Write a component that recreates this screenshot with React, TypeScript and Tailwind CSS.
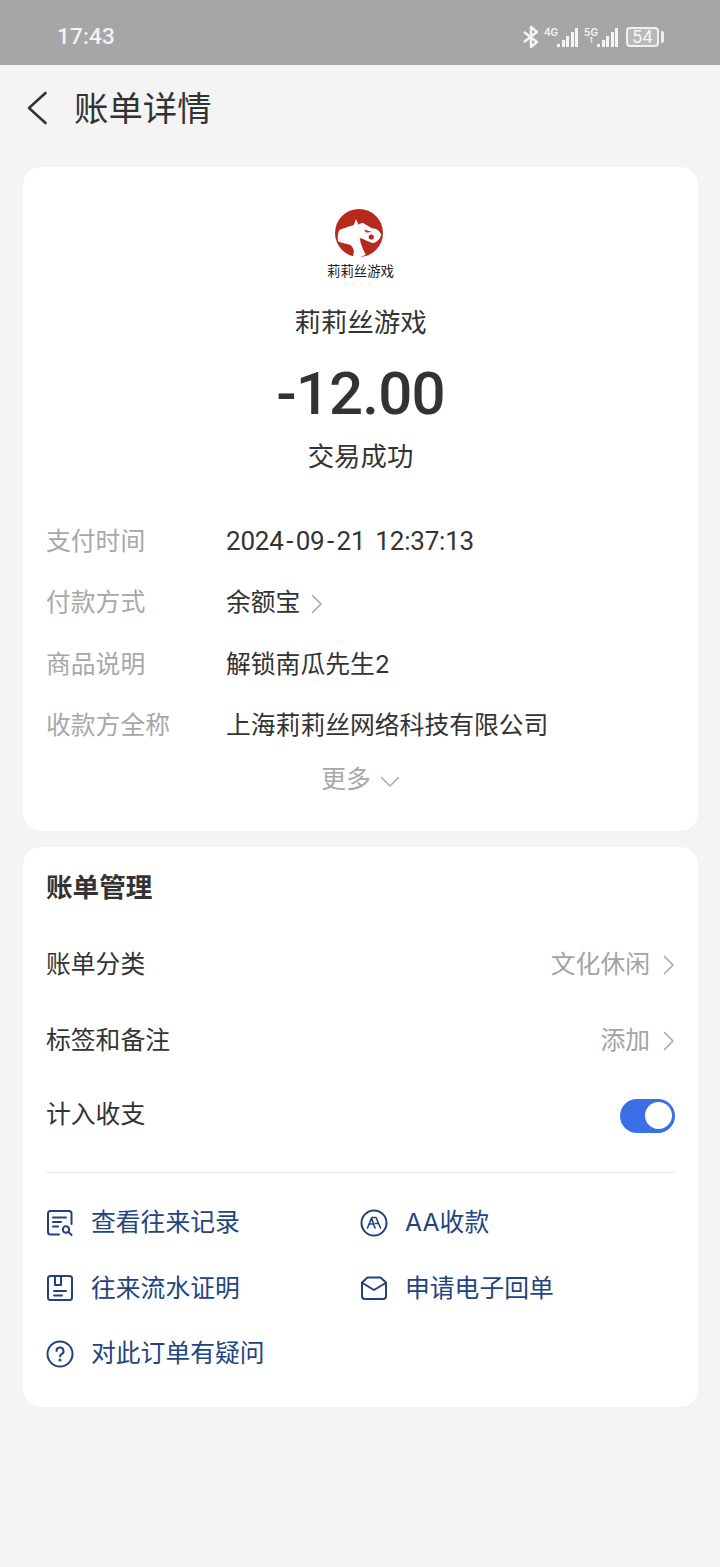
import React from "react";

const F = "font-['Inter','Noto_Sans_CJK_SC',sans-serif]";

function Chevron({ className = "" }: { className?: string }) {
  return (
    <svg width="12" height="20" viewBox="0 0 12 20" fill="none" className={className}>
      <path d="M1.5 1.5L10 10L1.5 18.5" stroke="#a9a9a9" strokeWidth="1.6" strokeLinecap="round" strokeLinejoin="round" />
    </svg>
  );
}

function InfoRow({ label, children }: { label: string; children: React.ReactNode }) {
  return (
    <div className="flex h-[61.3px] items-center">
      <div className="w-[180px] text-[24.8px] text-[#a8a8a8]">{label}</div>
      <div className="flex items-center text-[24.8px] text-[#333333]">{children}</div>
    </div>
  );
}

function ManageRow({ label, value }: { label: string; value: string }) {
  return (
    <div className="flex h-[76px] items-center justify-between">
      <span className="text-[24.8px] text-[#333333]">{label}</span>
      <span className="flex items-center gap-[13px] text-[24.8px] text-[#a3a3a3]">
        {value}
        <Chevron />
      </span>
    </div>
  );
}

const iconProps = { width: 28, height: 28, viewBox: "0 0 28 28", fill: "none", stroke: "#23417c", strokeWidth: 2, strokeLinecap: "round" as const, strokeLinejoin: "round" as const };

function LinkItem({ icon, text }: { icon: React.ReactNode; text: string }) {
  return (
    <div className="flex h-[65.5px] items-center gap-[17px]">
      {icon}
      <span className="text-[24.8px] text-[#23457f]">{text}</span>
    </div>
  );
}

function Signal({ label, sub }: { label: string; sub?: string }) {
  return (
    <div className="flex items-end">
      <div className="flex h-[20px] w-[12px] flex-col items-center text-[10px] font-semibold leading-[10px] text-[#f5f5f5]">
        <span>{label}</span>
        {sub ? <span className="text-[7px] leading-[8px]">{sub}</span> : null}
      </div>
      <div className="flex h-[19px] items-end gap-[1.5px]">
        <i className="block h-[3px] w-[3px] bg-[#f5f5f5]" />
        <i className="block h-[7px] w-[3px] bg-[#f5f5f5]" />
        <i className="block h-[11px] w-[3px] bg-[#f5f5f5]" />
        <i className="block h-[15px] w-[3px] bg-[#f5f5f5]" />
        <i className="block h-[19px] w-[3px] bg-[#f5f5f5]" />
      </div>
    </div>
  );
}

export default function App() {
  return (
    <div className={`flex h-[1567px] w-[720px] flex-col overflow-hidden bg-[#f4f4f4] ${F}`}>
      <div className="flex h-[65px] shrink-0 items-center justify-between bg-[#a6a6a6] pl-[57px] pr-[56px] pt-[9px]">
        <span className="font-['Roboto',sans-serif] text-[22.5px] font-medium tracking-[0.2px] text-[#f2f2f2]">17:43</span>
        <div className="flex items-center">
          <svg width="18" height="24" viewBox="0 0 18 24" fill="none" stroke="#f5f5f5" strokeWidth="2.4">
            <path d="M2 7L15 17L9 22V2L15 7L2 17" strokeLinejoin="round" />
          </svg>
          <div className="ml-[5px]"><Signal label="4G" /></div>
          <div className="ml-[7px]"><Signal label="5G" sub="1" /></div>
          <div className="ml-[8px] flex h-[20px] w-[33px] items-center justify-center rounded-[4px] border-2 border-[#f0f0f0] bg-[#b9b9b9] font-['Roboto',sans-serif] text-[18px] leading-none tracking-[0.5px] text-[#f5f5f5]">54</div>
          <div className="ml-[2px] h-[12px] w-[3px] rounded-r-[2px] bg-[#f0f0f0]" />
        </div>
      </div>

      <div className="flex h-[88px] shrink-0 items-center pl-[26px]">
        <svg width="22" height="34" viewBox="0 0 22 34" fill="none" className="mb-[2px]">
          <path d="M19.5 2L3 17L19.5 32" stroke="#333333" strokeWidth="2.6" strokeLinecap="round" strokeLinejoin="round" />
        </svg>
        <span className="ml-[26px] text-[34.4px] text-[#333333]">账单详情</span>
      </div>

      <div className="ml-[23px] mt-[14px] h-[664px] w-[675px] shrink-0 rounded-[18px] bg-white px-[23px]">
        <div className="flex flex-col items-center pt-[42px]">
          <svg width="50" height="50" viewBox="0 0 50 50" className="-ml-[3px]">
            <circle cx="25" cy="24" r="24" fill="#b8291d" />
            <path d="M4 25.7C4.5 23 5 21.5 5.7 20.7C9 19.5 13 18.5 15.7 17.3C17.5 16.8 19 16.5 19.7 15.7C21 14 21.5 12 21.7 10C23 12 24 14 24 15.7C26 14.5 27.5 14 29 14C32 15.5 35 17.5 37.3 19C40 19.5 42.5 20 44 21.3C45.5 22.5 46.5 24 47.3 25.7C46.5 28 45.5 30 44 31.3C42 33 40.5 34 39 34C37 34 35.5 33 34 32.3C32 31.5 30.5 30.5 29 30C28 29.5 27 29.2 25.7 29C26 31 26.5 33.5 27.3 35.7C28.5 39 30 42.5 31.7 45.7C29.5 47 27.5 47.7 25.7 48L19 48C19.5 45.5 20 43 19.7 41C19 38.5 17.5 36.5 15.7 35.7C13.5 35 11 34.7 9 34C7 33.5 5.5 33 4 32.3C3.7 30 3.7 28 4 25.7Z" fill="#ffffff" />
            <circle cx="37.3" cy="28" r="2.6" fill="#b8291d" />
            <path d="M30 20.5L38 23L32 23.5Z" fill="#b8291d" />
          </svg>
          <div className="mt-[2px] text-[13.4px] leading-[20px] text-[#222222]">莉莉丝游戏</div>
          <div className="h-[6px] text-[6px] leading-[6px] tracking-[6px] text-[#777777]">····</div>
          <div className="mt-[15px] text-[26.5px] leading-[40px] text-[#333333]">莉莉丝游戏</div>
          <div className="mt-[14px] font-['Roboto',sans-serif] text-[60px] font-medium leading-[76px] tracking-[-0.8px] text-[#333333]">-12.00</div>
          <div className="mt-[4px] text-[26.4px] leading-[40px] text-[#333333]">交易成功</div>
        </div>
        <div className="mt-[35px]">
          <InfoRow label="支付时间">
            <span className="font-['Roboto',sans-serif] text-[26px] tracking-[-0.2px]">
              2024<span className="mx-[2.5px]">-</span>09<span className="mx-[2.5px]">-</span>21<span className="ml-[10px]">12:37:13</span>
            </span>
          </InfoRow>
          <InfoRow label="付款方式">余额宝<Chevron className="ml-[11px] mt-[2px]" /></InfoRow>
          <InfoRow label="商品说明">解锁南瓜先生2</InfoRow>
          <InfoRow label="收款方全称">上海莉莉丝网络科技有限公司</InfoRow>
        </div>
        <div className="flex items-center justify-center gap-[9px] pt-[5px] text-[24.8px] leading-[36px] text-[#a8a8a8]">
          更多
          <svg width="20" height="12" viewBox="0 0 20 12" fill="none" className="mt-[6px]">
            <path d="M1.5 1.5L10 10L18.5 1.5" stroke="#a9a9a9" strokeWidth="1.5" strokeLinecap="round" strokeLinejoin="round" />
          </svg>
        </div>
      </div>

      <div className="ml-[23px] mt-[16px] h-[560px] w-[675px] shrink-0 rounded-[18px] bg-white px-[23px]">
        <div className="pt-[20px] text-[26.6px] font-bold leading-[40px] text-[#333333]">账单管理</div>
        <div className="mt-[20px]">
          <ManageRow label="账单分类" value="文化休闲" />
          <ManageRow label="标签和备注" value="添加" />
          <div className="flex h-[73px] items-center justify-between">
            <span className="mb-[2px] text-[24.8px] text-[#333333]">计入收支</span>
            <div className="flex h-[34px] w-[55px] items-center justify-end rounded-full bg-[#3a6fe6] pr-[3px]">
              <div className="h-[27px] w-[27px] rounded-full bg-white" />
            </div>
          </div>
        </div>
        <div className="mt-[20px] border-t border-[#e6e6e6] pt-[17px]">
          <div className="grid grid-cols-[314px_1fr]">
            <LinkItem
              text="查看往来记录"
              icon={
                <svg {...iconProps}>
                  <path d="M13 25.5H4.5A2.5 2.5 0 0 1 2 23V4.5A2.5 2.5 0 0 1 4.5 2H23A2.5 2.5 0 0 1 25.5 4.5V15" />
                  <path d="M7 8.5H20M7 13H15M7 17.5H12" />
                  <circle cx="20" cy="20.5" r="3.2" />
                  <path d="M22.5 23L25.5 26" />
                </svg>
              }
            />
            <LinkItem
              text="AA收款"
              icon={
                <svg {...iconProps}>
                  <circle cx="14" cy="14" r="12.5" />
                  <path d="M7.5 19L11.5 9L15 19M9.5 15H13.5M12 8.5H16L20.5 19M15.5 14.5H18.5" strokeWidth="1.6" />
                </svg>
              }
            />
            <LinkItem
              text="往来流水证明"
              icon={
                <svg {...iconProps}>
                  <rect x="2" y="2" width="24" height="24" rx="2.5" />
                  <path d="M9 2V11H15V2M8 17H20M8 21.5H16" />
                </svg>
              }
            />
            <LinkItem
              text="申请电子回单"
              icon={
                <svg {...iconProps}>
                  <path d="M2 8.5L7.5 3.5H20.5L26 8.5V22A3 3 0 0 1 23 25H5A3 3 0 0 1 2 22Z" />
                  <path d="M2.5 9L14 16L25.5 9" />
                </svg>
              }
            />
            <LinkItem
              text="对此订单有疑问"
              icon={
                <svg {...iconProps}>
                  <circle cx="14" cy="14" r="12.5" />
                  <path d="M10.5 11A3.5 3.5 0 1 1 15.5 14.2C14.5 14.8 14 15.4 14 16.5" />
                  <circle cx="14" cy="20" r="0.6" fill="#23417c" />
                </svg>
              }
            />
          </div>
        </div>
      </div>
    </div>
  );
}
